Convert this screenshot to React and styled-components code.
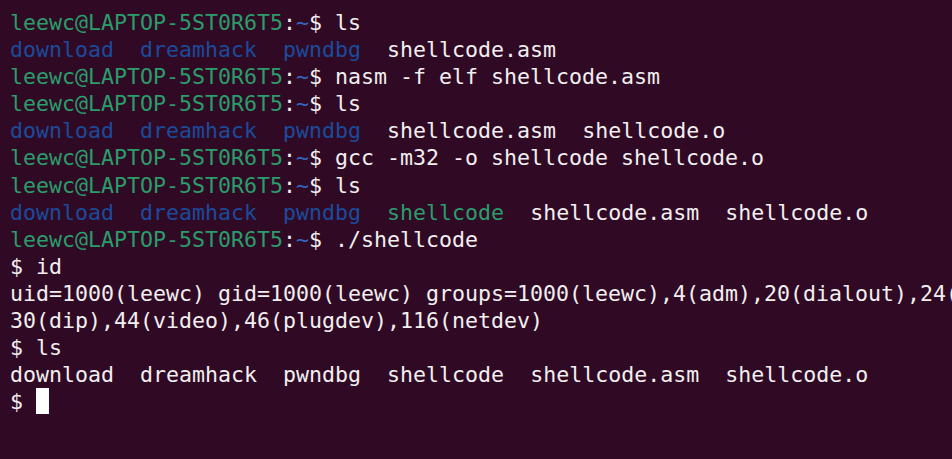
import styled, { createGlobalStyle } from "styled-components";

const Global = createGlobalStyle`
  html, body {
    margin: 0;
    padding: 0;
    background: #300a24;
  }
`;

const colors = {
  green: "#2a9d6b",
  blue: "#1a4a9c",
  tilde: "#3465c0",
  white: "#f2eff0",
};

const Terminal = styled.div`
  width: 952px;
  height: 459px;
  box-sizing: border-box;
  padding: 9px 0 0 10px;
  background: #300a24;
  color: ${colors.white};
  font-family: "DejaVu Sans Mono", "Liberation Mono", monospace;
  font-size: 21.6px;
  line-height: 27.1px;
  overflow: hidden;
`;

const Line = styled.div`
  white-space: pre;
  height: 27.1px;
`;

const Tok = styled.span`
  color: ${(p) => colors[p.$c] || colors.white};
`;

const Cursor = styled.span`
  display: inline-block;
  width: 13px;
  height: 26px;
  background: #ffffff;
  vertical-align: top;
`;

const Prompt = ({ cmd }) => (
  <Line>
    <Tok $c="green">leewc@LAPTOP-5ST0R6T5</Tok>
    <Tok>:</Tok>
    <Tok $c="tilde">~</Tok>
    <Tok>$ {cmd}</Tok>
  </Line>
);

const Listing = ({ items }) => (
  <Line>
    {items.map(([name, c], i) => (
      <Tok key={i} $c={c}>
        {name}
        {i < items.length - 1 ? "  " : ""}
      </Tok>
    ))}
  </Line>
);

const dirs = [
  ["download", "blue"],
  ["dreamhack", "blue"],
  ["pwndbg", "blue"],
];

export default function App() {
  return (
    <>
      <Global />
      <Terminal>
        <Prompt cmd="ls" />
        <Listing items={[...dirs, ["shellcode.asm"]]} />
        <Prompt cmd="nasm -f elf shellcode.asm" />
        <Prompt cmd="ls" />
        <Listing items={[...dirs, ["shellcode.asm"], ["shellcode.o"]]} />
        <Prompt cmd="gcc -m32 -o shellcode shellcode.o" />
        <Prompt cmd="ls" />
        <Listing
          items={[...dirs, ["shellcode", "green"], ["shellcode.asm"], ["shellcode.o"]]}
        />
        <Prompt cmd="./shellcode" />
        <Line>$ id</Line>
        <Line>
          uid=1000(leewc) gid=1000(leewc) groups=1000(leewc),4(adm),20(dialout),24(
        </Line>
        <Line>30(dip),44(video),46(plugdev),116(netdev)</Line>
        <Line>$ ls</Line>
        <Listing
          items={[["download"], ["dreamhack"], ["pwndbg"], ["shellcode"], ["shellcode.asm"], ["shellcode.o"]]}
        />
        <Line>
          $ <Cursor />
        </Line>
      </Terminal>
    </>
  );
}
